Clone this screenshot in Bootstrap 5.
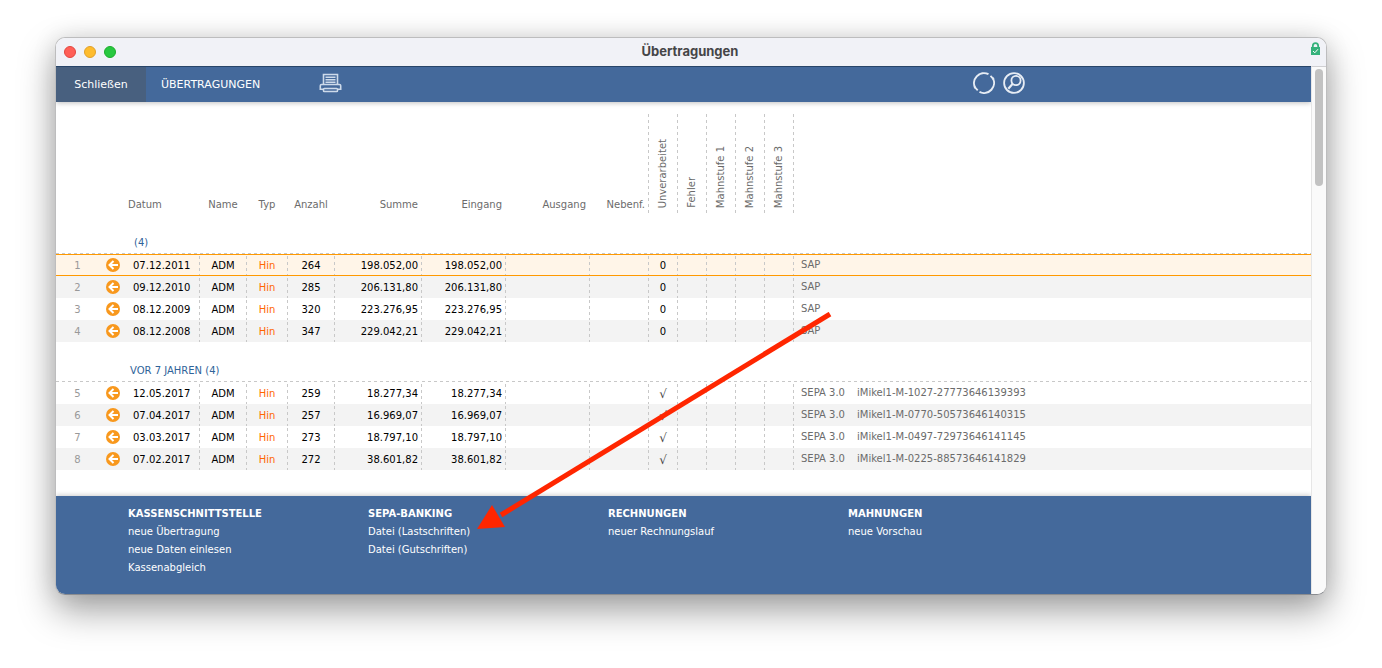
<!DOCTYPE html>
<html lang="de">
<head>
<meta charset="utf-8">
<meta name="viewport" content="width=device-width, initial-scale=1">
<title>Übertragungen</title>
<link href="https://cdn.jsdelivr.net/npm/bootstrap@5.3.0/dist/css/bootstrap.min.css" rel="stylesheet">
<style>
  :root { --blue: #44699b; --dash: #c8c8c8; }
  body { font-family: "DejaVu Sans", Verdana, sans-serif; font-size: 10px; line-height: 22px; background: #fff; padding: 37px 55px 0; min-height: 100vh; }
  .win { border: 1px solid #bdbdbe; border-bottom-color: #8a8c90; border-radius: 10px; background: #fff; box-shadow: 0 16px 36px rgba(0,0,0,.36), 0 0 24px rgba(0,0,0,.1); }
  .win-clip { border-radius: 9px; overflow: hidden; }
  .titlebar { height: 28px; background: #f1f2f7; padding: 0 14px 0 8px; }
  .titlebar h1 { font: 700 13px/27px Inter, sans-serif; color: #454547; }
  .light { width: 12px; height: 12px; border-radius: 50%; border: 1px solid; }
  .light-red { background: #ff5f57; border-color: #e2463f; }
  .light-yellow { background: #febc2e; border-color: #e0a02a; }
  .light-green { background: #28c840; border-color: #1dad2b; }
  .lights { width: 88px; padding-top: 8px; gap: 8px; }
  .lock { width: 92px; padding-top: 4px; margin-right: -8px; }
  .toolbar { height: 36px; background: var(--blue); border-top: 1px solid #284569; font-size: 11px; box-shadow: 0 1px 5px rgba(0,0,0,.25); position: relative; }
  .toolbar button { color: #fff; border: 0; background: none; padding: 0; line-height: 35px; }
  .toolbar .btn-close-win { background: #48607f; width: 90px; }
  .toolbar .title-btn { margin: 0 59px 0 15px; }
  .toolbar svg { margin-bottom: 3px; }
  .tool-right { padding-right: 286px; gap: 8px; }
  .scroller { width: 15px; background: #fafafa; border-left: 1px solid #e6e6e6; border-top: 1px solid #cfcfd2; padding: 2px 3px; }
  .thumb { width: 8px; height: 117px; border-radius: 4px; background: #c2c2c2; }
  .grid { width: 100%; table-layout: fixed; border-collapse: separate; border-spacing: 0; margin-bottom: 26px; color: #000; }
  .grid td, .grid th { padding: 0; white-space: nowrap; }
  .grid thead th { height: 112px; vertical-align: bottom; font-weight: 400; color: #6b6b6b; text-align: center; padding-right: 1px; line-height: 18px; }
  .grid td { height: 22px; text-align: center; padding: 2px 1px 0 0; line-height: 20px; }
  .grid td.pic { padding: 0; }
  .grid thead th.num, .grid td.num { text-align: right; padding-right: 4px; }
  .grid thead th.day { text-align: left; padding-left: 2px; }
  .grid td.day { text-align: left; padding-left: 7px; }
  .grid .ln { background: repeating-linear-gradient(to bottom, var(--dash) 0 3px, transparent 3px 6px) right 2px / 1px 100% no-repeat; }
  .grid thead .ln { background-position: right 12px; }
  .vert { writing-mode: vertical-rl; transform: rotate(180deg); line-height: 28px; width: 28px; padding-top: 6px; }
  .grid .grp td { height: 40px; text-align: left; vertical-align: bottom; padding: 0 0 0 74px; color: #2f6399; line-height: 23px; background: repeating-linear-gradient(to right, var(--dash) 0 3px, transparent 3px 6px) left bottom / 100% 1px no-repeat; }
  .grid .grp .blank { padding-left: 4px; }
  .grid .even { background: #f3f3f3; }
  .grid .sel { background: #fff5e8; }
  .grid .sel td { box-shadow: inset 0 1px #f90, inset 0 -1px #f90; }
  .grid .no { color: #999; }
  .grid .typ { color: #ff6600; }
  .grid .chk { color: #444; font-size: 12px; }
  .grid td.info { text-align: left; color: #6b6b6b; padding: 0 0 0 7px; }
  .info .fmt { display: inline-block; width: 56px; }
  .grid svg { display: block; margin: 0 auto; }
  .foot { background: var(--blue); padding: 9px 0 17px 72px; line-height: 18px; box-shadow: 0 -1px 5px rgba(0,0,0,.2); position: relative; }
  .foot section { width: 240px; }
  .foot h2 { font-size: 10px; line-height: 18px; font-weight: 700; color: #fff; }
  .foot a { color: #fff; text-decoration: none; display: block; }
  .pointer { position: absolute; left: 421px; top: 274px; pointer-events: none; }
</style>
</head>
<body>
<svg class="d-none">
  <symbol id="in" viewBox="0 0 14 14"><circle cx="7" cy="7" r="7" fill="#f8981d"/><path d="M12 7H4M7.500 3 3.500 7l4 4" fill="none" stroke="#fff" stroke-width="2"/></symbol>
</svg>
<div class="win position-relative">
 <div class="win-clip">
  <header class="titlebar d-flex justify-content-between">
    <div class="lights d-flex"><span class="light light-red"></span><span class="light light-yellow"></span><span class="light light-green"></span></div>
    <h1 class="m-0">Übertragungen</h1>
    <div class="lock d-flex justify-content-end">
      <svg width="9" height="14" viewBox="0 0 9 14"><path d="M1.800 6V4a2.700 2.900 0 0 1 5.400 0v2" fill="none" stroke="#35b27b" stroke-width="1.800"/><rect y="5" width="9" height="8" fill="#35b27b"/><path d="m2 9 1.800 1.800L7 7.200" fill="none" stroke="#fff"/></svg>
    </div>
  </header>
  <div class="d-flex">
   <main class="flex-grow-1 overflow-hidden">
    <nav class="toolbar d-flex align-items-center">
      <button type="button" class="btn-close-win">Schließen</button>
      <button type="button" class="title-btn">ÜBERTRAGUNGEN</button>
      <button type="button" class="d-flex" aria-label="Drucken">
        <svg width="24" height="20" viewBox="0 0 24 20" fill="none" stroke="#cddaea" stroke-width="1.600"><path d="M4.500 11V1.500h14V11M6.500 4.200h10M6.500 6.700h10M6.500 9.200h10"/><path d="M4.500 11.500h-2q-1.200 0-1.200 1.200v3.600h3.200v1.400q0 .8.800.8h12.400q.8 0 .8-.8v-1.400h3.200v-3.600q0-1.200-1.200-1.200h-2M4.500 11.500h14M4.500 16.300q0-.8.800-.8h12.400q.8 0 .8.800"/></svg>
      </button>
      <div class="tool-right d-flex ms-auto">
        <button type="button" class="d-flex" aria-label="Aktualisieren"><svg width="22" height="22" viewBox="0 0 22 22" fill="none" stroke="#e6ecf4" stroke-width="2"><path d="M15.500 2.200A10 10 0 0 0 2.400 16.200M6.500 19.900A10 10 0 0 0 19.600 5.800"/><path d="M1.200 14.500 4.700 18.300M17.500 3.800l3.300 3.600" stroke-width="1.800"/></svg></button>
        <button type="button" class="d-flex" aria-label="Suchen"><svg width="22" height="22" viewBox="0 0 22 22" fill="none" stroke="#e6ecf4" stroke-width="1.800"><circle cx="11" cy="11" r="9.900"/><circle cx="13" cy="8.500" r="4.600"/><path d="m9.700 11.800-4.400 5" stroke-width="2.200"/></svg></button>
      </div>
    </nav>
    <table class="grid">
      <colgroup><col width="44"><col width="26"><col width="74"><col width="47"><col width="41"><col width="47"><col width="87"><col width="84"><col width="84"><col width="59"><col width="29"><col width="29"><col width="29"><col width="29"><col width="29"><col></colgroup>
      <thead><tr><th></th><th></th><th class="day">Datum</th><th>Name</th><th>Typ</th><th>Anzahl</th><th class="num">Summe</th><th class="num">Eingang</th><th class="num">Ausgang</th><th class="num ln">Nebenf.</th><th class="ln"><div class="vert">Unverarbeitet</div></th><th class="ln"><div class="vert">Fehler</div></th><th class="ln"><div class="vert">Mahnstufe 1</div></th><th class="ln"><div class="vert">Mahnstufe 2</div></th><th class="ln"><div class="vert">Mahnstufe 3</div></th><th></th></tr></thead>
      <tbody id="rows"></tbody>
    </table>
    <footer class="foot d-flex">
      <section><h2 class="m-0">KASSENSCHNITTSTELLE</h2><a href="#">neue Übertragung</a><a href="#">neue Daten einlesen</a><a href="#">Kassenabgleich</a></section>
      <section><h2 class="m-0">SEPA-BANKING</h2><a href="#">Datei (Lastschriften)</a><a href="#">Datei (Gutschriften)</a></section>
      <section><h2 class="m-0">RECHNUNGEN</h2><a href="#">neuer Rechnungslauf</a></section>
      <section><h2 class="m-0">MAHNUNGEN</h2><a href="#">neue Vorschau</a></section>
    </footer>
   </main>
   <div class="scroller flex-shrink-0"><div class="thumb"></div></div>
  </div>
 </div>
 <svg class="pointer" width="360" height="220" viewBox="0 0 360 220"><path d="M353 2 24 203" stroke="#ff2600" stroke-width="5"/><path d="M0 217 15 193 28 215z" fill="#ff2600"/></svg>
</div>
<script>
  const groups = [
    ['(4)', [['07.12.2011','264','198.052,00'],['09.12.2010','285','206.131,80'],['08.12.2009','320','223.276,95'],['08.12.2008','347','229.042,21']]],
    ['VOR 7 JAHREN (4)', [['12.05.2017','259','18.277,34','1027-27773646139393'],['07.04.2017','257','16.969,07','0770-50573646140315'],['03.03.2017','273','18.797,10','0497-72973646141145'],['07.02.2017','272','38.601,82','0225-88573646141829']]]
  ];
  let n = 0, html = '';
  for (const [label, items] of groups) {
    html += `<tr class="grp"><td colspan="16"><span class="${n ? '' : 'blank'}">${label}</span></td></tr>`;
    for (const [day, count, sum, ref] of items) {
      n++;
      const info = ref ? `<span class="fmt">SEPA 3.0</span>iMikel1-M-${ref}` : 'SAP';
      html += `<tr class="${n === 1 ? 'sel' : n % 2 ? '' : 'even'}"><td class="no">${n}</td><td class="pic"><svg width="14" height="14"><use href="#in"/></svg></td><td class="day ln">${day}</td><td class="ln">ADM</td><td class="typ ln">Hin</td><td class="ln">${count}</td><td class="num ln">${sum}</td><td class="num ln">${sum}</td><td class="ln"></td><td class="ln"></td><td class="ln ${ref ? 'chk' : ''}">${ref ? '√' : '0'}</td>${'<td class="ln"></td>'.repeat(4)}<td class="info">${info}</td></tr>`;
    }
  }
  document.getElementById('rows').innerHTML = html;
</script>
<script src="https://cdn.jsdelivr.net/npm/bootstrap@5.3.0/dist/js/bootstrap.bundle.min.js"></script>
</body>
</html>
